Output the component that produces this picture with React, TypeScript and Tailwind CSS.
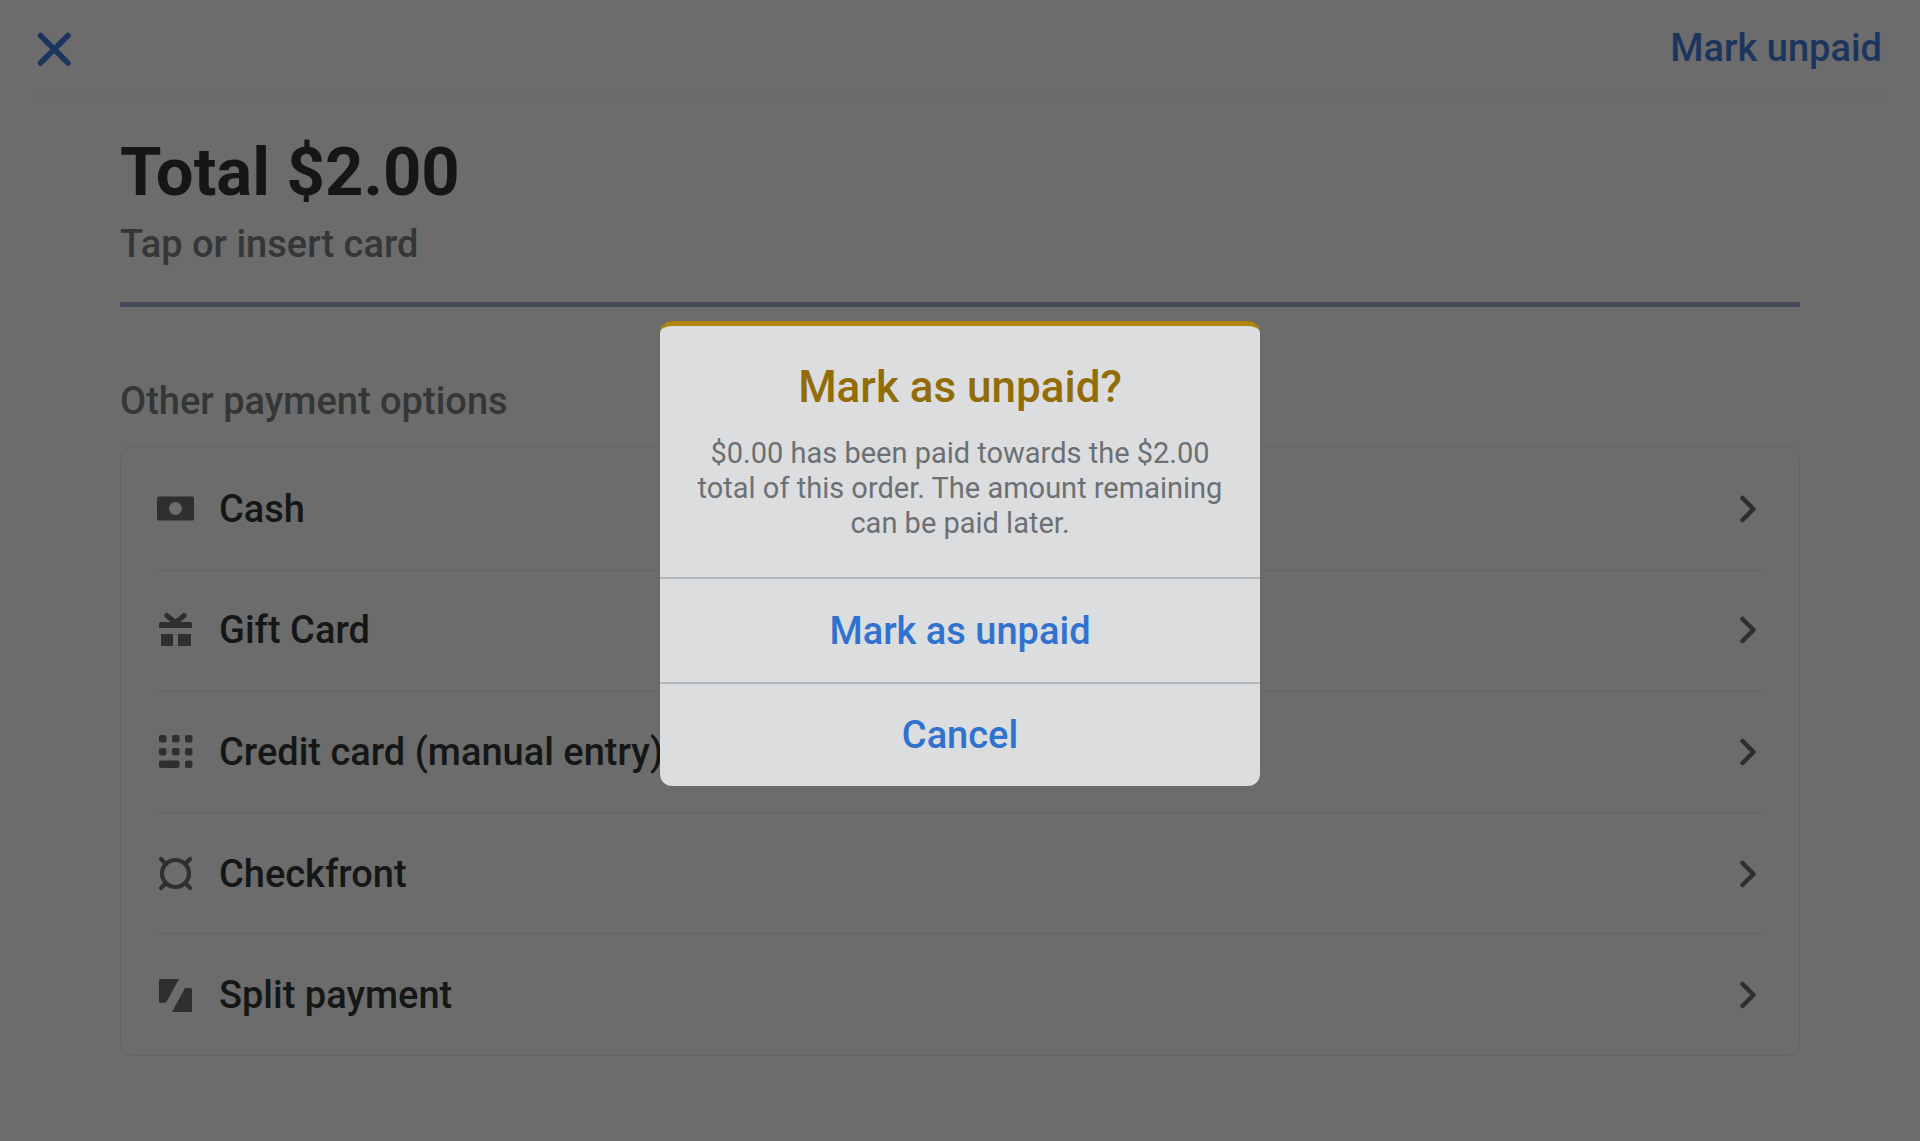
import type { ReactNode } from "react";

const icons: Record<string, ReactNode> = {
  cash: (
    <path fillRule="evenodd" d="M1.5 6.500h34a1.500 1.500 0 0 1 1.500 1.500v21a1.500 1.500 0 0 1-1.500 1.500h-34A1.500 1.500 0 0 1 0 29v-21A1.500 1.500 0 0 1 1.500 6.500ZM18.500 12a6.500 6.500 0 1 0 0 13a6.500 6.500 0 0 0 0-13Z" />
  ),
  gift: (
    <>
      <path d="M9.800 3.500L18.500 10.500L27.200 3.500" fill="none" stroke="currentColor" strokeWidth="5" strokeLinecap="round" strokeLinejoin="round" />
      <path d="M3.500 10h30a1.500 1.500 0 0 1 1.500 1.500V16H2v-4.500A1.500 1.500 0 0 1 3.500 10ZM4 22h12v12H5.500A1.500 1.500 0 0 1 4 32.500ZM21 22h13v10.500a1.500 1.500 0 0 1-1.500 1.500H21Z" />
    </>
  ),
  keypad: (
    <>
      {[2, 15, 28].map((x) => (
        <g key={x}>
          <rect x={x} y="2" width="7.500" height="7.500" rx="2" />
          <rect x={x} y="15" width="7.500" height="7.500" rx="2" />
        </g>
      ))}
      <rect x="2" y="27.500" width="20.500" height="7.500" rx="2" />
      <rect x="28" y="27.500" width="7.500" height="7.500" rx="2" />
    </>
  ),
  currency: (
    <g fill="none" stroke="currentColor" strokeWidth="4.200" strokeLinecap="round">
      <circle cx="18.500" cy="18.500" r="13.500" />
      <path d="M4 4l4.500 4.500M33 4l-4.500 4.500M4 33l4.500-4.500M33 33l-4.500-4.500" />
    </g>
  ),
  split: (
    <path d="M3.500 2H22L9.600 24.800a2 2 0 0 1-1.700 1H3.500A1.500 1.500 0 0 1 2 24.300V3.500A1.500 1.500 0 0 1 3.500 2ZM29 11h4.500A1.500 1.500 0 0 1 35 12.500v21a1.500 1.500 0 0 1-1.500 1.500H15L27.400 12a2 2 0 0 1 1.600-1Z" />
  ),
};

const options = [
  { icon: "cash", label: "Cash" },
  { icon: "gift", label: "Gift Card" },
  { icon: "keypad", label: "Credit card (manual entry)" },
  { icon: "currency", label: "Checkfront" },
  { icon: "split", label: "Split payment" },
];

function Chevron() {
  return (
    <svg viewBox="0 0 18 28" className="h-7 w-[18px]" fill="none" stroke="currentColor" strokeWidth="4.500" strokeLinecap="round" strokeLinejoin="round" aria-hidden="true">
      <path d="M3.500 3L14.500 14L3.500 25" />
    </svg>
  );
}

function Checkout() {
  return (
    <div className="min-h-screen">
      <header className="mx-9 flex h-[97px] items-center justify-between border-b-2 border-[#676767] text-[#1b355f]">
        <button type="button" aria-label="Close" className="pt-1 pr-1 pb-0.5 pl-px">
          <svg viewBox="0 0 34 34" className="size-[34px]" fill="none" stroke="currentColor" strokeWidth="5.500" strokeLinecap="round" aria-hidden="true">
            <path d="M3.500 3.500L31 31M31 3.500L3.500 31" />
          </svg>
        </button>
        <button type="button" className="pr-0.5 text-[38px] leading-[48px] font-medium">
          Mark unpaid
        </button>
      </header>
      <main className="px-[120px] pb-20">
        <section className="border-b-[5px] border-[#444a59] pt-9 pb-[34px]">
          <h1 className="text-[67px] leading-[78px] font-bold text-[#151716]">Total $2.00</h1>
          <p className="mt-[9px] text-[38px] leading-[48px] font-medium text-[#343637]">Tap or insert card</p>
        </section>
        <h2 className="mt-[70px] text-[38px] leading-[48px] font-medium text-[#343637]">Other payment options</h2>
        <ul className="mt-[21px] grid min-h-[610px] auto-rows-fr rounded-xl border border-[#646464] px-9">
          {options.map((option) => (
            <li key={option.label} className="border-t-2 border-[#676767] first:border-transparent">
              <button type="button" className="flex h-full w-full items-center pr-1.5 text-left">
                <svg viewBox="0 0 38 37" className="h-[37px] w-[38px] text-[#2f2f31]" fill="currentColor" aria-hidden="true">
                  {icons[option.icon]}
                </svg>
                <span className="ml-6 flex-1 text-[38px] leading-[48px] font-medium text-[#151716]">{option.label}</span>
                <span className="text-[#2f2f31]">
                  <Chevron />
                </span>
              </button>
            </li>
          ))}
        </ul>
      </main>
    </div>
  );
}

function ConfirmDialog() {
  return (
    <div className="fixed inset-0 flex items-center justify-center px-8 pt-8 pb-[66px]">
      <div
        role="alertdialog"
        aria-modal="true"
        aria-labelledby="dialog-title"
        aria-describedby="dialog-text"
        className="w-full max-w-[600px] rounded-xl border-t-[5px] border-[#b08609] bg-[#dcddde] text-center"
      >
        <div className="px-9 pt-[35px] pb-9">
          <h2 id="dialog-title" className="text-[44px] leading-[52px] font-medium text-[#926c07]">
            Mark as unpaid?
          </h2>
          <p id="dialog-text" className="mt-[23px] text-[29px] leading-[35px] text-[#6c7075]">
            $0.00 has been paid towards the $2.00 total of this order. The amount remaining can be paid later.
          </p>
        </div>
        <div className="text-[38px] leading-[48px] font-medium text-[#3072d0]">
          <button type="button" className="block h-[105px] w-full border-t-2 border-[#b3b7bb]">
            Mark as unpaid
          </button>
          <button type="button" className="block h-[104px] w-full border-t-2 border-[#b3b7bb]">
            Cancel
          </button>
        </div>
      </div>
    </div>
  );
}

export default function App() {
  return (
    <div className="min-h-screen bg-[#6c6c6c] font-['Roboto',sans-serif]">
      <Checkout />
      <ConfirmDialog />
    </div>
  );
}
